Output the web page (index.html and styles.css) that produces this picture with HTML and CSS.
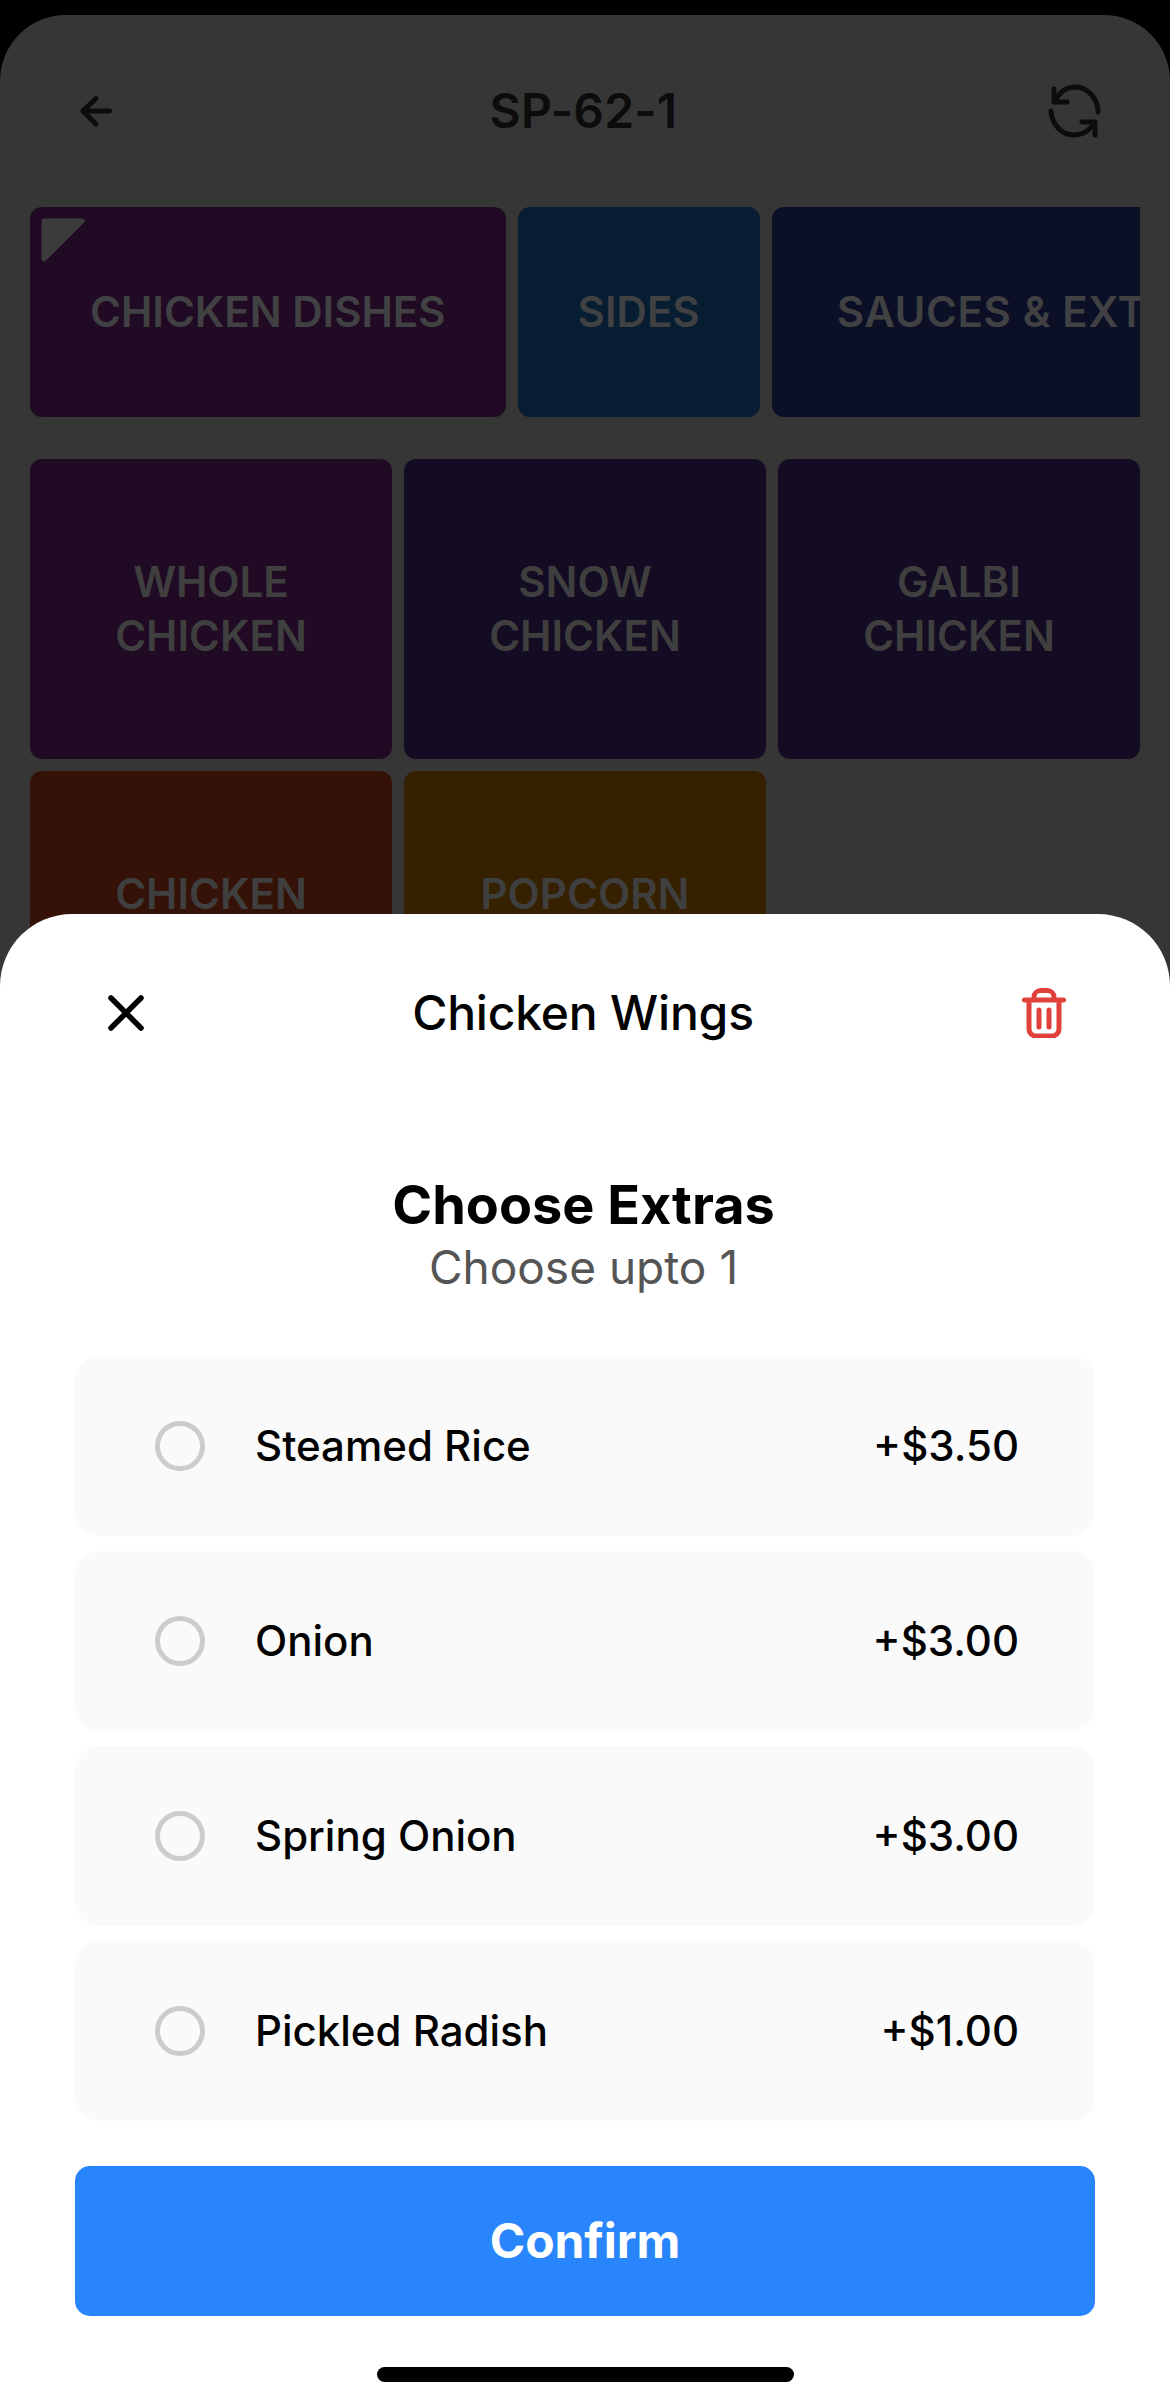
FILE: index.html
```html
<!DOCTYPE html>
<html lang="en">
<head>
<meta charset="utf-8">
<title>Chicken Wings</title>
<link rel="stylesheet" href="styles.css">
</head>
<body>
<div class="phone">
  <main class="screen">
    <header class="topbar">
      <svg class="back" viewBox="0 0 40 40" fill="none" stroke="#0c0c0c" stroke-width="5" stroke-linecap="round" stroke-linejoin="round"><path d="M33.500 20H7.500M20 7.500 7 20l13 13"/></svg>
      <h1 class="code">SP-62-1</h1>
      <svg class="refresh" viewBox="0 0 54 54" fill="none" stroke="#0c0c0c" stroke-width="5" stroke-linecap="round" stroke-linejoin="round"><path d="M7 5v13h13M51 28C51 14 40 3 28 3 19 3 12 9 8 17"/><path d="M48 51V38H35M4 27c1 14 11 24 23 24 9 0 16-5 21-13"/></svg>
    </header>
    <nav class="tabs">
      <div class="tab tab-purple">
        <svg class="corner" viewBox="0 0 44 44" fill="#3c3c3c" stroke="#3c3c3c" stroke-width="5" stroke-linejoin="round"><path d="M3 3h38L3 41z"/></svg>
        CHICKEN DISHES
      </div>
      <div class="tab tab-blue">SIDES</div>
      <div class="tab tab-navy">SAUCES &amp; EXTRAS</div>
    </nav>
    <section class="grid">
      <div class="tile tile-purple">WHOLE<br>CHICKEN</div>
      <div class="tile tile-indigo">SNOW<br>CHICKEN</div>
      <div class="tile tile-indigo">GALBI<br>CHICKEN</div>
      <div class="tile tile-red">CHICKEN<br>WINGS</div>
      <div class="tile tile-amber">POPCORN<br>CHICKEN</div>
    </section>
  </main>
  <aside class="sheet">
    <header class="sheet-head">
      <svg class="close" viewBox="0 0 40 40" fill="none" stroke="#000" stroke-width="5.500" stroke-linecap="round"><path d="M5 5l30 30M35 5 5 35"/></svg>
      <h2 class="item-name">Chicken Wings</h2>
      <svg class="trash" viewBox="0 0 44 50" fill="none" stroke="#e0413a" stroke-width="5" stroke-linecap="round" stroke-linejoin="round"><path d="M2.500 12h39M12 12V9a6.500 6.500 0 0 1 6.500-6.500h7A6.500 6.500 0 0 1 32 9v3M7 12v29a7 7 0 0 0 7 7h16a7 7 0 0 0 7-7V12M17 22v17M27 22v17"/></svg>
    </header>
    <div class="intro">
      <h3 class="intro-title">Choose Extras</h3>
      <p class="intro-sub">Choose upto 1</p>
    </div>
    <ul class="options">
      <li class="option"><span class="radio"></span><span class="label">Steamed Rice</span><span class="price">+$3.50</span></li>
      <li class="option"><span class="radio"></span><span class="label">Onion</span><span class="price">+$3.00</span></li>
      <li class="option"><span class="radio"></span><span class="label">Spring Onion</span><span class="price">+$3.00</span></li>
      <li class="option"><span class="radio"></span><span class="label">Pickled Radish</span><span class="price">+$1.00</span></li>
    </ul>
    <button class="confirm">Confirm</button>
    <div class="home-bar"></div>
  </aside>
</div>
</body>
</html>
```

FILE: styles.css
```css
* { box-sizing: border-box; }
html, body { margin: 0; padding: 0; background: #000; }
body { font-family: Inter, "Liberation Sans", sans-serif; }
h1, h2, h3, p, ul { margin: 0; padding: 0; }

.phone {
  position: relative;
  width: 1170px;
  height: 2406px;
  overflow: hidden;
  background: #000;
  padding-top: 15px;
}

.screen {
  height: 2391px;
  background: #363636;
  border-radius: 66px 66px 0 0;
  overflow: hidden;
}

.topbar {
  height: 192px;
  padding: 0 69px 0 66px;
  display: grid;
  grid-template-columns: 1fr auto 1fr;
  align-items: center;
}
.back { width: 40px; height: 40px; margin-left: 10px; }
.code { font-size: 48px; font-weight: 600; color: #0c0c0c; line-height: 58px; letter-spacing: 0.2px; }
.refresh { width: 54px; height: 54px; justify-self: end; }

.tabs {
  display: flex;
  gap: 12px;
  margin: 0 30px;
  overflow: hidden;
}
.tab {
  position: relative;
  flex: none;
  height: 210px;
  padding: 0 60px 2px;
  display: flex;
  align-items: center;
  border-radius: 12px;
  font-size: 42px;
  font-weight: 600;
  color: #414143;
}
.tab-purple { background: #200a24; }
.tab-blue { background: #071d31; }
.tab-navy { background: #0b1026; padding-left: 65px; letter-spacing: 0.6px; }
.corner {
  position: absolute;
  left: 11px;
  top: 11px;
  width: 44px;
  height: 44px;
}

.grid {
  display: grid;
  grid-template-columns: repeat(3, 362px);
  grid-auto-rows: 300px;
  gap: 12px;
  margin: 42px 30px 0;
}
.tile {
  display: flex;
  align-items: center;
  justify-content: center;
  text-align: center;
  border-radius: 12px;
  font-size: 42px;
  line-height: 54px;
  font-weight: 600;
  color: #3f3f3f;
}
.tile-purple { background: #200a24; }
.tile-indigo { background: #140c22; }
.tile-red { background: #341208; }
.tile-amber { background: #352000; }

.sheet {
  position: absolute;
  left: 0;
  right: 0;
  top: 914px;
  bottom: 0;
  background: #fff;
  border-radius: 72px 72px 0 0;
  padding: 0 75px;
  display: flex;
  flex-direction: column;
}
.sheet-head {
  height: 198px;
  margin: 0 29px 0 25px;
  display: grid;
  grid-template-columns: 1fr auto 1fr;
  align-items: center;
}
.close { width: 40px; height: 40px; margin-left: 6px; }
.item-name { font-size: 48px; font-weight: 500; line-height: 58px; color: #000; letter-spacing: -0.2px; }
.trash { width: 44px; height: 50px; justify-self: end; }

.intro { text-align: center; margin-top: 60px; padding-right: 3px; }
.intro-title { font-size: 54px; font-weight: 700; line-height: 66px; color: #000; }
.intro-sub { font-size: 46px; font-weight: 400; line-height: 58px; color: #555; }

.options { list-style: none; display: flex; flex-direction: column; gap: 15px; margin-top: 60px; }
.option {
  height: 180px;
  background: #fafafa;
  border-radius: 24px;
  padding: 0 76px 0 80px;
  display: flex;
  align-items: center;
  font-size: 42px;
  font-weight: 450;
  color: #000;
}
.radio {
  width: 50px;
  height: 50px;
  border: 5px solid #ccc;
  border-radius: 50%;
  margin-right: 50px;
}
.label { flex: 1; padding-bottom: 2px; }
.price { padding-bottom: 2px; }

.confirm {
  margin-top: 45px;
  height: 150px;
  border: 0;
  border-radius: 15px;
  padding: 0 0 2px;
  background: #2985fb;
  color: #fff;
  font-family: inherit;
  font-size: 48px;
  font-weight: 700;
  letter-spacing: -0.1px;
}
.home-bar {
  align-self: center;
  width: 417px;
  height: 15px;
  margin-top: 51px;
  background: #000;
  border-radius: 8px;
}
```
